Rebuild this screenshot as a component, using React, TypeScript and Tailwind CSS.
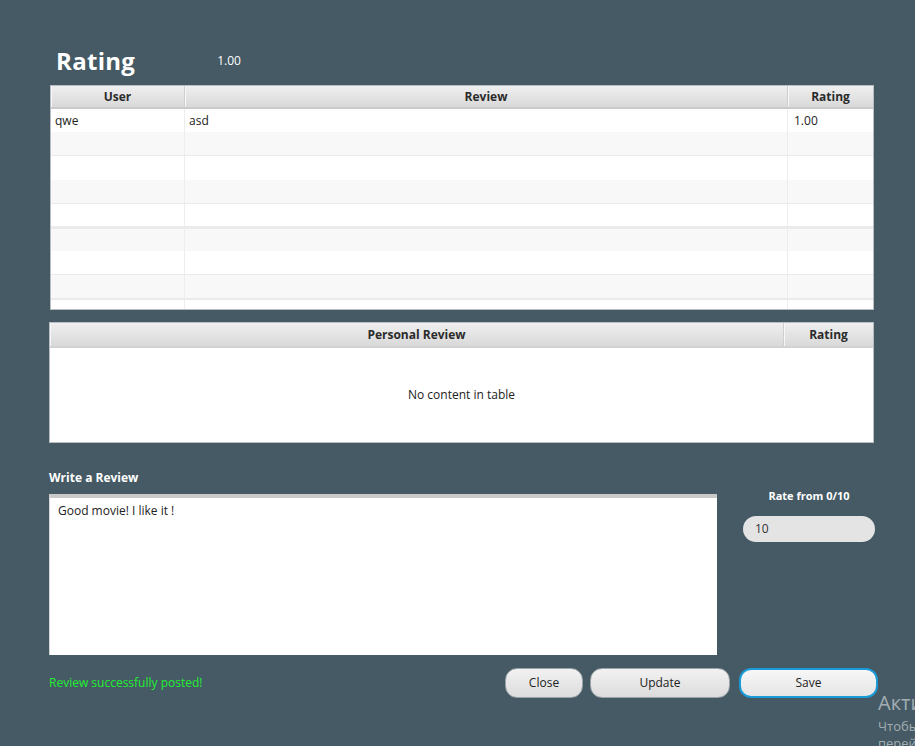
import React from "react";

const rows: { bg: string; h: number; line: number; user?: string; review?: string; rating?: string }[] = [
  { bg: "bg-white", h: 23, line: 0, user: "qwe", review: "asd", rating: "1.00" },
  { bg: "bg-[#f8f8f8]", h: 23, line: 1 },
  { bg: "bg-white", h: 24, line: 0 },
  { bg: "bg-[#f8f8f8]", h: 23, line: 1 },
  { bg: "bg-white", h: 22, line: 3 },
  { bg: "bg-[#f8f8f8]", h: 22, line: 0 },
  { bg: "bg-white", h: 23, line: 1 },
  { bg: "bg-[#f8f8f8]", h: 23, line: 2 },
  { bg: "bg-white", h: 9, line: 0 },
];

function HeaderCell({ children, className = "" }: { children: React.ReactNode; className?: string }) {
  return (
    <div
      className={`flex items-center justify-center border-r border-[#cfcfcf] shadow-[inset_1px_0_0_#f7f7f7] text-[12px] font-bold text-[#2b2b2b] ${className}`}
    >
      {children}
    </div>
  );
}

export default function App() {
  const font = { fontFamily: '"Open Sans", "Noto Sans", sans-serif' };
  return (
    <div className="relative w-[915px] h-[746px] overflow-hidden bg-[#455a64]" style={font}>
      <div className="flex flex-col pl-[49px] pr-[36px]">
        {/* Title */}
        <div className="flex items-center h-[28px] mt-[47px] pl-[7px]">
          <span className="text-[24px] font-bold text-white leading-none tracking-[0.3px]">Rating</span>
          <span className="ml-[82px] text-[12px] text-white">1.00</span>
        </div>

        {/* Table 1 */}
        <div className="mt-[10px] ml-[1px] w-[824px] h-[225px] border border-[#b8bec2] bg-white flex flex-col overflow-hidden">
          <div className="flex h-[23px] bg-gradient-to-b from-[#efefef] to-[#d9d9d9] border-b-2 border-[#cacaca] shrink-0">
            <HeaderCell className="w-[134px]">User</HeaderCell>
            <HeaderCell className="w-[603px]">Review</HeaderCell>
            <HeaderCell className="flex-1 border-r-0">Rating</HeaderCell>
          </div>
          {rows.map((r, i) => (
            <div key={i} className="flex flex-col shrink-0">
              <div className={`flex ${r.bg} text-[12px] text-[#222]`} style={{ height: r.h }}>
                <div className="w-[134px] border-r border-[#ededed] pl-[4px] flex items-center">{r.user}</div>
                <div className="w-[603px] border-r border-[#ededed] pl-[4px] flex items-center">{r.review}</div>
                <div className="flex-1 pl-[6px] flex items-center">{r.rating}</div>
              </div>
              {r.line > 0 && <div className="bg-[#ebebeb]" style={{ height: r.line }} />}
            </div>
          ))}
        </div>

        {/* Table 2 */}
        <div className="mt-[12px] w-[825px] h-[121px] border border-[#b8bec2] bg-white flex flex-col">
          <div className="flex h-[25px] bg-gradient-to-b from-[#efefef] to-[#d9d9d9] border-b-2 border-[#d2d2d2] shrink-0">
            <HeaderCell className="w-[734px]">Personal Review</HeaderCell>
            <HeaderCell className="flex-1 border-r-0">Rating</HeaderCell>
          </div>
          <div className="flex-1 flex items-center justify-center text-[12px] text-[#222]">No content in table</div>
        </div>

        {/* Write a review */}
        <div className="mt-[27px] text-[12px] font-bold text-white leading-[16px]">Write a Review</div>
        <div className="flex mt-[8px]">
          <div className="w-[668px] h-[161px] bg-white border-t-[4px] border-t-[#c9c9c9] border-l border-l-[#d5d5d5] pl-[8px] pt-[4px] text-[12px] text-[#222]">
            Good movie! I like it !
          </div>
          <div className="ml-[26px] w-[132px] flex flex-col items-center">
            <div className="text-[11px] font-bold text-white mt-[-6px] leading-[16px]">Rate from 0/10</div>
            <div className="mt-[12px] w-[132px] h-[26px] rounded-full bg-[#e4e4e4] text-[12px] text-[#333] flex items-center pl-[12px]">
              10
            </div>
          </div>
        </div>

        {/* Bottom row */}
        <div className="flex items-center mt-[13px] h-[30px]">
          <div className="text-[12px] text-[#22ee33] w-[456px] shrink-0">Review successfully posted!</div>
          <button className="w-[78px] h-[30px] shrink-0 rounded-[12px] bg-gradient-to-b from-[#f2f2f2] to-[#dcdcdc] border border-[#9aa3a8] text-[12px] text-[#222]">
            Close
          </button>
          <button className="ml-[7px] w-[140px] h-[30px] shrink-0 rounded-[12px] bg-gradient-to-b from-[#f2f2f2] to-[#dcdcdc] border border-[#9aa3a8] text-[12px] text-[#222]">
            Update
          </button>
          <button className="ml-[9px] w-[139px] h-[30px] shrink-0 rounded-[12px] bg-gradient-to-b from-[#f7f7f7] to-[#e6e6e6] border-2 border-[#1a9bd7] text-[12px] text-[#222]">
            Save
          </button>
        </div>
      </div>

      {/* Windows activation watermark */}
      <div className="absolute left-[878px] top-[692px] text-[#a3adb2] leading-none whitespace-nowrap">
        <div className="text-[20px] leading-[22px]">Активация Windows</div>
        <div className="text-[13px] leading-[16px] mt-[4px]">Чтобы активировать Windows,</div>
        <div className="text-[13px] leading-[18px]">перейдите в раздел</div>
      </div>
    </div>
  );
}
